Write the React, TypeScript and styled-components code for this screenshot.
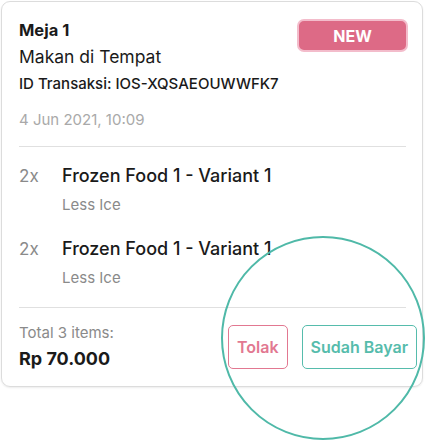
import styled, { createGlobalStyle } from 'styled-components';

const Global = createGlobalStyle`
	body {
		margin: 0;
		font-family: Inter, "Noto Sans", sans-serif;
		color: #1a1a1a;
		background: #fff;
	}
`;

const Page = styled.div`
	position: relative;
	width: 427px;
	height: 442px;
	padding: 1px;
	box-sizing: border-box;
	overflow: hidden;
`;

const Card = styled.div`
	width: 422px;
	height: 386px;
	box-sizing: border-box;
	border: 1px solid #dcdcdc;
	border-radius: 9px;
	box-shadow: 0 1px 2px rgba(0, 0, 0, 0.08);
	padding: 16px 16px 0 17px;
	display: flex;
	flex-direction: column;
`;

const Header = styled.div`
	display: flex;
	justify-content: space-between;
	align-items: flex-start;
`;

const Titles = styled.div`
	display: flex;
	flex-direction: column;
	gap: 3px;
`;

const Table = styled.div`
	font-size: 16.5px;
	font-weight: 700;
	line-height: 24px;
`;

const Service = styled.div`
	font-size: 17.5px;
	line-height: 24px;
`;

const Badge = styled.div`
	width: 111px;
	height: 33px;
	box-sizing: border-box;
	margin-top: 1px;
	margin-right: -2px;
	border: 2px solid #f3bccb;
	border-radius: 7px;
	background: #dd6a86;
	color: #fff;
	font-size: 16px;
	font-weight: 700;
	display: flex;
	align-items: center;
	justify-content: center;
`;

const TxId = styled.div`
	margin-top: 5px;
	font-size: 15px;
	font-weight: 500;
	line-height: 20px;
`;

const Stamp = styled.div`
	margin-top: 16px;
	font-size: 15px;
	line-height: 20px;
	color: #a9a9a9;
`;

const Divider = styled.hr<{ $top: number }>`
	border: none;
	border-top: 1.5px solid #e0e0e0;
	margin: ${(p) => p.$top}px 0 0;
`;

const Items = styled.div`
	display: flex;
	flex-direction: column;
	gap: 22px;
	padding-top: 17px;
`;

const Row = styled.div`
	display: grid;
	grid-template-columns: 43px 1fr;
	row-gap: 7px;
`;

const Qty = styled.div`
	font-size: 17px;
	line-height: 24px;
	color: #8a8a8a;
`;

const Name = styled.div`
	font-size: 18px;
	font-weight: 500;
	line-height: 24px;
`;

const Note = styled.div`
	grid-column: 2;
	font-size: 15px;
	line-height: 20px;
	color: #8a8a8a;
`;

const Footer = styled.div`
	flex: 1;
	display: flex;
	align-items: center;
	justify-content: space-between;
	margin-right: -11px;
`;

const Total = styled.div`
	display: flex;
	flex-direction: column;
	gap: 4px;
`;

const TotalLabel = styled.div`
	font-size: 15px;
	line-height: 20px;
	color: #8a8a8a;
`;

const Amount = styled.div`
	font-size: 18px;
	font-weight: 700;
	line-height: 24px;
`;

const Actions = styled.div`
	display: flex;
	gap: 14px;
`;

const Btn = styled.button<{ $tone: string }>`
	height: 44px;
	padding: 0 8px;
	background: #fff;
	border: 1.5px solid ${(p) => p.$tone};
	border-radius: 5px;
	color: ${(p) => p.$tone};
	font-family: inherit;
	font-size: 16px;
	font-weight: 600;
	cursor: pointer;
`;

const Focus = styled.div`
	position: absolute;
	left: 221px;
	top: 236px;
	width: 204px;
	height: 204px;
	box-sizing: border-box;
	border: 2px solid #4fb9a8;
	border-radius: 50%;
	pointer-events: none;
`;

const items = [
  { qty: 2, name: 'Frozen Food 1 - Variant 1', note: 'Less Ice' },
  { qty: 2, name: 'Frozen Food 1 - Variant 1', note: 'Less Ice' },
];

export default function App() {
  return (
    <Page>
      <Global />
      <Card>
        <Header>
          <Titles>
            <Table>Meja 1</Table>
            <Service>Makan di Tempat</Service>
          </Titles>
          <Badge>NEW</Badge>
        </Header>
        <TxId>ID Transaksi: IOS-XQSAEOUWWFK7</TxId>
        <Stamp>4 Jun 2021, 10:09</Stamp>
        <Divider $top={16} />
        <Items>
          {items.map((it, i) => (
            <Row key={i}>
              <Qty>{it.qty}x</Qty>
              <Name>{it.name}</Name>
              <Note>{it.note}</Note>
            </Row>
          ))}
        </Items>
        <Divider $top={19} />
        <Footer>
          <Total>
            <TotalLabel>Total 3 items:</TotalLabel>
            <Amount>Rp 70.000</Amount>
          </Total>
          <Actions>
            <Btn $tone="#e27891">Tolak</Btn>
            <Btn $tone="#56bcac">Sudah Bayar</Btn>
          </Actions>
        </Footer>
      </Card>
      <Focus />
    </Page>
  );
}
